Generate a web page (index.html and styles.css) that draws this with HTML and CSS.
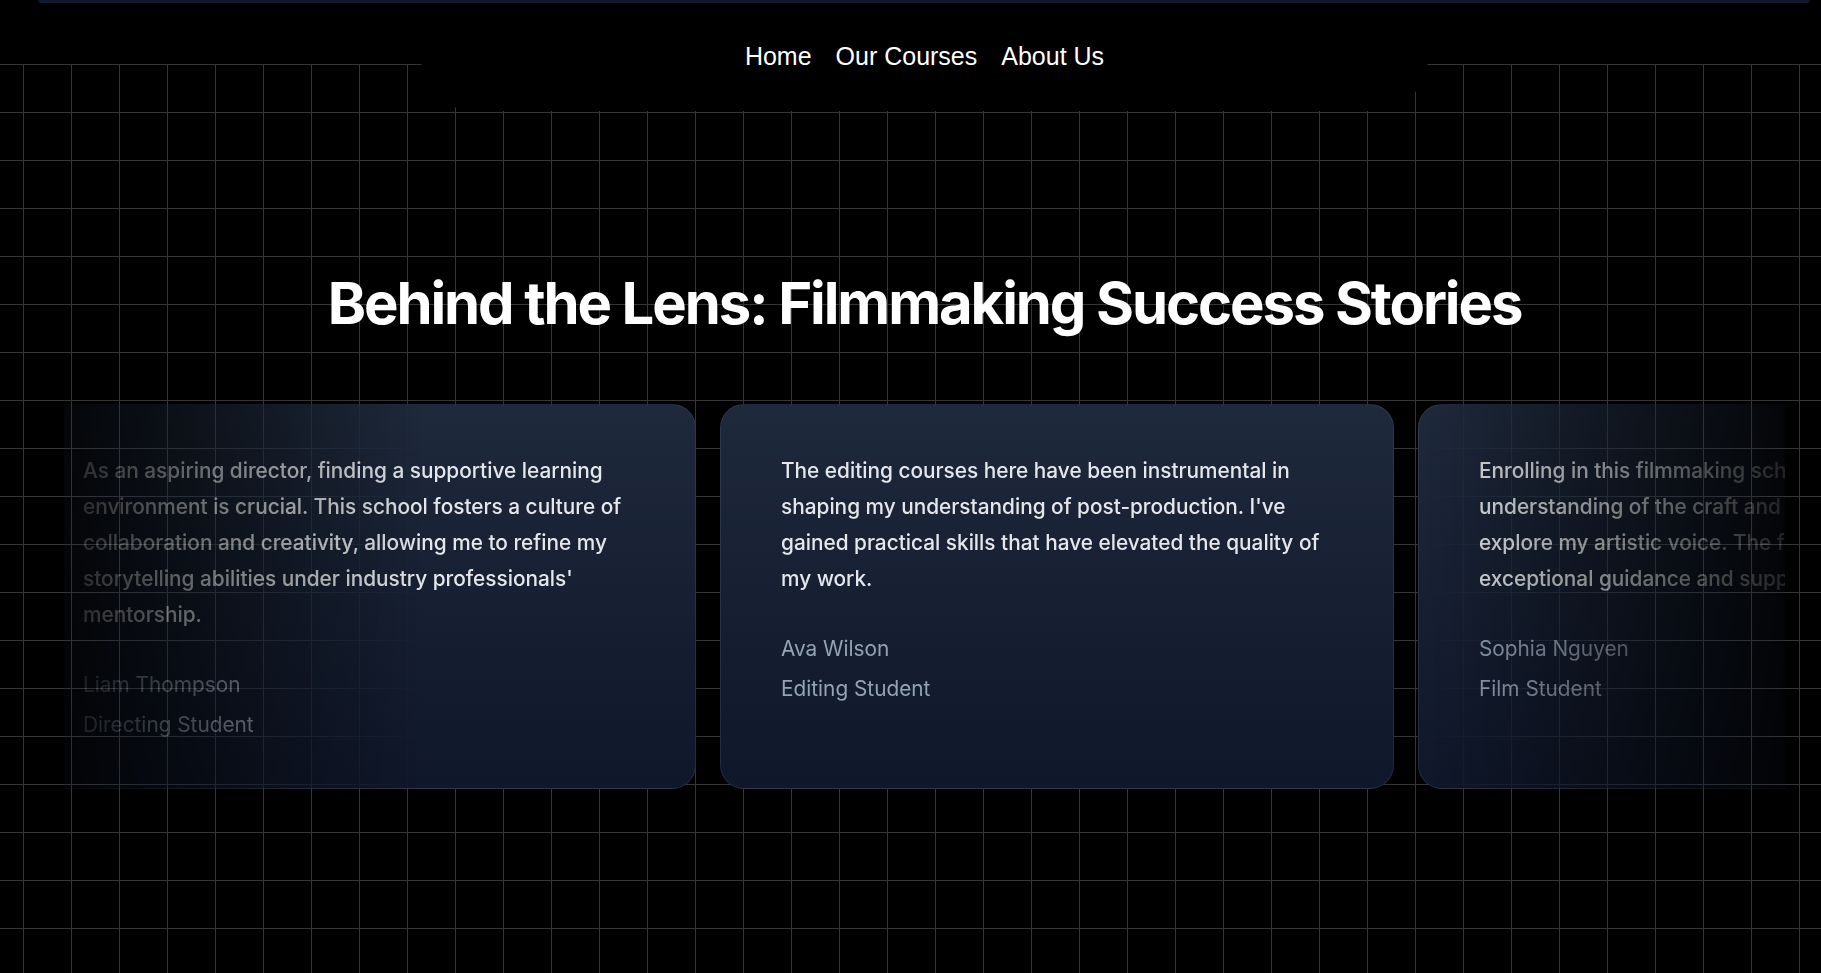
FILE: index.html
```html
<!DOCTYPE html>
<html lang="en">
<head>
<meta charset="utf-8">
<title>Behind the Lens: Filmmaking Success Stories</title>
<link rel="stylesheet" href="styles.css">
</head>
<body>
  <header class="header">
    <div class="topbar"></div>
    <nav class="nav">
      <a href="#" class="nav-link">Home</a>
      <a href="#" class="nav-link">Our Courses</a>
      <a href="#" class="nav-link">About Us</a>
    </nav>
  </header>
  <main class="stage">
    <h1 class="title">Behind the Lens: Filmmaking Success Stories</h1>
    <div class="carousel">
      <div class="track">
        <article class="card">
          <p class="quote">As an aspiring director, finding a supportive learning environment is crucial. This school fosters a culture of collaboration and creativity, allowing me to refine my storytelling abilities under industry professionals' mentorship.</p>
          <div class="name">Liam Thompson</div>
          <div class="role">Directing Student</div>
        </article>
        <article class="card">
          <p class="quote">The editing courses here have been instrumental in shaping my understanding of post-production. I've gained practical skills that have elevated the quality of my work.</p>
          <div class="name">Ava Wilson</div>
          <div class="role">Editing Student</div>
        </article>
        <article class="card">
          <p class="quote">Enrolling in this filmmaking school has deepened my understanding of the craft and given me the freedom to explore my artistic voice. The faculty here provides exceptional guidance and support.</p>
          <div class="name">Sophia Nguyen</div>
          <div class="role">Film Student</div>
        </article>
      </div>
    </div>
  </main>
</body>
</html>
```

FILE: styles.css
```css
html, body {
  margin: 0;
  padding: 0;
  background: #000;
}

body {
  font-family: Inter, "Noto Sans", sans-serif;
  color: #fff;
  overflow: hidden;
}

.header {
  height: 64px;
  padding-left: 28px;
  display: flex;
  flex-direction: column;
  background: #000;
}

.topbar {
  flex-shrink: 0;
  height: 3px;
  margin: 0 11px 0 10px;
  background: #111a2d;
  border-radius: 0 0 4px 4px;
}

.nav {
  position: relative;
  z-index: 1;
  flex-shrink: 0;
  align-self: center;
  width: 1007px;
  height: 108px;
  box-sizing: border-box;
  padding-top: 38px;
  background: #000;
  border-radius: 0 0 54px 54px;
  display: flex;
  justify-content: center;
  align-items: flex-start;
  gap: 24px;
}

.nav-link {
  font-family: "Liberation Sans", Arial, sans-serif;
  font-size: 25px;
  line-height: 30px;
  color: #fff;
  text-decoration: none;
}

.stage {
  min-height: calc(100vh - 64px);
  box-sizing: border-box;
  padding-left: 28px;
  padding-top: 204px;
  background-color: #000;
  background-image:
    linear-gradient(to right, #363636 1px, transparent 1px),
    linear-gradient(to bottom, #363636 1px, transparent 1px);
  background-size: 48px 48px;
  background-position: 23px 0;
}

.title {
  margin: 0;
  text-align: center;
  font-family: Inter, sans-serif;
  font-weight: 700;
  font-size: 58px;
  line-height: 70px;
  letter-spacing: -0.036em;
  color: #fff;
}

.carousel {
  margin: 66px 36px 0;
  overflow: hidden;
  -webkit-mask-image: linear-gradient(to right, rgba(0,0,0,0.15) 0%, #000 21%, #000 79%, rgba(0,0,0,0.15) 100%);
  mask-image: linear-gradient(to right, rgba(0,0,0,0.15) 0%, #000 21%, #000 79%, rgba(0,0,0,0.15) 100%);
}

.track {
  display: flex;
  gap: 24px;
  margin-left: -42px;
}

.card {
  flex: 0 0 674px;
  box-sizing: border-box;
  padding: 48px 60px 43px;
  border: 1px solid rgba(148, 163, 184, 0.14);
  border-radius: 24px;
  background: linear-gradient(to bottom, #1e293b, #0f172a);
}

.quote {
  margin: 0;
  font-family: Inter, sans-serif;
  font-weight: 500;
  font-size: 20.8px;
  line-height: 36px;
  color: #e5e7eb;
}

.name {
  margin-top: 32px;
}

.name,
.role {
  font-family: Inter, sans-serif;
  font-weight: 400;
  font-size: 20.8px;
  line-height: 40px;
  color: #94a3b8;
}
```
